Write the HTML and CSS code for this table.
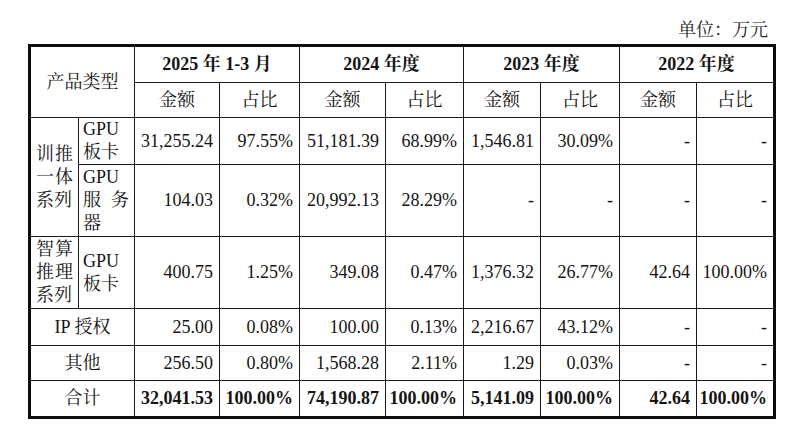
FILE: index.html
```html
<!DOCTYPE html>
<html lang="zh-CN">
<head>
<meta charset="utf-8">
<title>产品类型收入构成</title>
<link rel="stylesheet" href="styles.css">
</head>
<body>
<div class="page">
  <div class="unit">单位：万元</div>
  <table class="data">
    <colgroup>
      <col class="c1"><col class="c2"><col class="c3"><col class="c4"><col class="c5">
      <col class="c6"><col class="c7"><col class="c8"><col class="c9"><col class="c10">
    </colgroup>
    <tbody>
      <tr class="r1">
        <td class="ctr" colspan="2" rowspan="2">产品类型</td>
        <td class="ctr b" colspan="2">2025 年 1-3 月</td>
        <td class="ctr b" colspan="2">2024 年度</td>
        <td class="ctr b" colspan="2">2023 年度</td>
        <td class="ctr b last" colspan="2">2022 年度</td>
      </tr>
      <tr class="r2">
        <td class="ctr">金额</td><td class="ctr">占比</td>
        <td class="ctr">金额</td><td class="ctr">占比</td>
        <td class="ctr">金额</td><td class="ctr">占比</td>
        <td class="ctr">金额</td><td class="ctr last">占比</td>
      </tr>
      <tr class="r3">
        <td class="grp" rowspan="2">训推一体系列</td>
        <td class="sub">GPU板卡</td>
        <td class="num">31,255.24</td><td class="num">97.55%</td>
        <td class="num">51,181.39</td><td class="num">68.99%</td>
        <td class="num">1,546.81</td><td class="num">30.09%</td>
        <td class="num">-</td><td class="num last">-</td>
      </tr>
      <tr class="r4">
        <td class="sub">GPU服务器</td>
        <td class="num">104.03</td><td class="num">0.32%</td>
        <td class="num">20,992.13</td><td class="num">28.29%</td>
        <td class="num">-</td><td class="num">-</td>
        <td class="num">-</td><td class="num last">-</td>
      </tr>
      <tr class="r5">
        <td class="grp">智算推理系列</td>
        <td class="sub">GPU板卡</td>
        <td class="num">400.75</td><td class="num">1.25%</td>
        <td class="num">349.08</td><td class="num">0.47%</td>
        <td class="num">1,376.32</td><td class="num">26.77%</td>
        <td class="num">42.64</td><td class="num last">100.00%</td>
      </tr>
      <tr class="r6">
        <td class="ctr" colspan="2">IP 授权</td>
        <td class="num">25.00</td><td class="num">0.08%</td>
        <td class="num">100.00</td><td class="num">0.13%</td>
        <td class="num">2,216.67</td><td class="num">43.12%</td>
        <td class="num">-</td><td class="num last">-</td>
      </tr>
      <tr class="r7">
        <td class="ctr" colspan="2">其他</td>
        <td class="num">256.50</td><td class="num">0.80%</td>
        <td class="num">1,568.28</td><td class="num">2.11%</td>
        <td class="num">1.29</td><td class="num">0.03%</td>
        <td class="num">-</td><td class="num last">-</td>
      </tr>
      <tr class="r8 total">
        <td class="ctr" colspan="2">合计</td>
        <td class="num b">32,041.53</td><td class="num b">100.00%</td>
        <td class="num b">74,190.87</td><td class="num b">100.00%</td>
        <td class="num b">5,141.09</td><td class="num b">100.00%</td>
        <td class="num b">42.64</td><td class="num b last">100.00%</td>
      </tr>
    </tbody>
  </table>
</div>
</body>
</html>
```

FILE: styles.css
```css
html, body {
  margin: 0;
  padding: 0;
  background: #ffffff;
}

body {
  font-family: "Liberation Serif", "Noto Serif CJK SC", "Noto Sans CJK SC", serif;
  font-size: 18px;
  color: #141414;
}

.page {
  width: 748px;
  padding: 18px 0 0 28px;
}

.unit {
  height: 26px;
  line-height: 24px;
  text-align: right;
  padding-right: 8px;
  color: #262626;
}

.data {
  table-layout: fixed;
  border-collapse: separate;
  border-spacing: 0;
  border: 3px solid #0d0d0d;
  width: 748px;
}

.c1 { width: 48px; }
.c2 { width: 56px; }
.c3 { width: 85px; }
.c4 { width: 80px; }
.c5 { width: 86px; }
.c6 { width: 78px; }
.c7 { width: 77px; }
.c8 { width: 79px; }
.c9 { width: 77px; }
.c10 { width: 76px; }

.data td {
  box-sizing: border-box;
  border-right: 1px solid #1a1a1a;
  border-bottom: 1px solid #1a1a1a;
  padding: 0;
  line-height: 23px;
  white-space: nowrap;
  vertical-align: middle;
}

.data td.last { border-right: none; }
.data .total td { border-bottom: none; }

.r1 { height: 36px; }
.r2 { height: 35px; }
.r3 { height: 46px; }
.r4 { height: 72px; }
.r5 { height: 72px; }
.r6 { height: 37px; }
.r7 { height: 35px; }
.r8 { height: 35px; }

.ctr { text-align: center; }

.b { font-weight: bold; }

.num {
  text-align: right;
  padding-right: 6px !important;
}

.data td.grp,
.data td.sub {
  white-space: normal;
  text-align: justify;
  word-break: break-all;
}

.data td.grp { padding: 0 5px; }
.data td.sub { padding: 0 5px 0 4px; }
```
